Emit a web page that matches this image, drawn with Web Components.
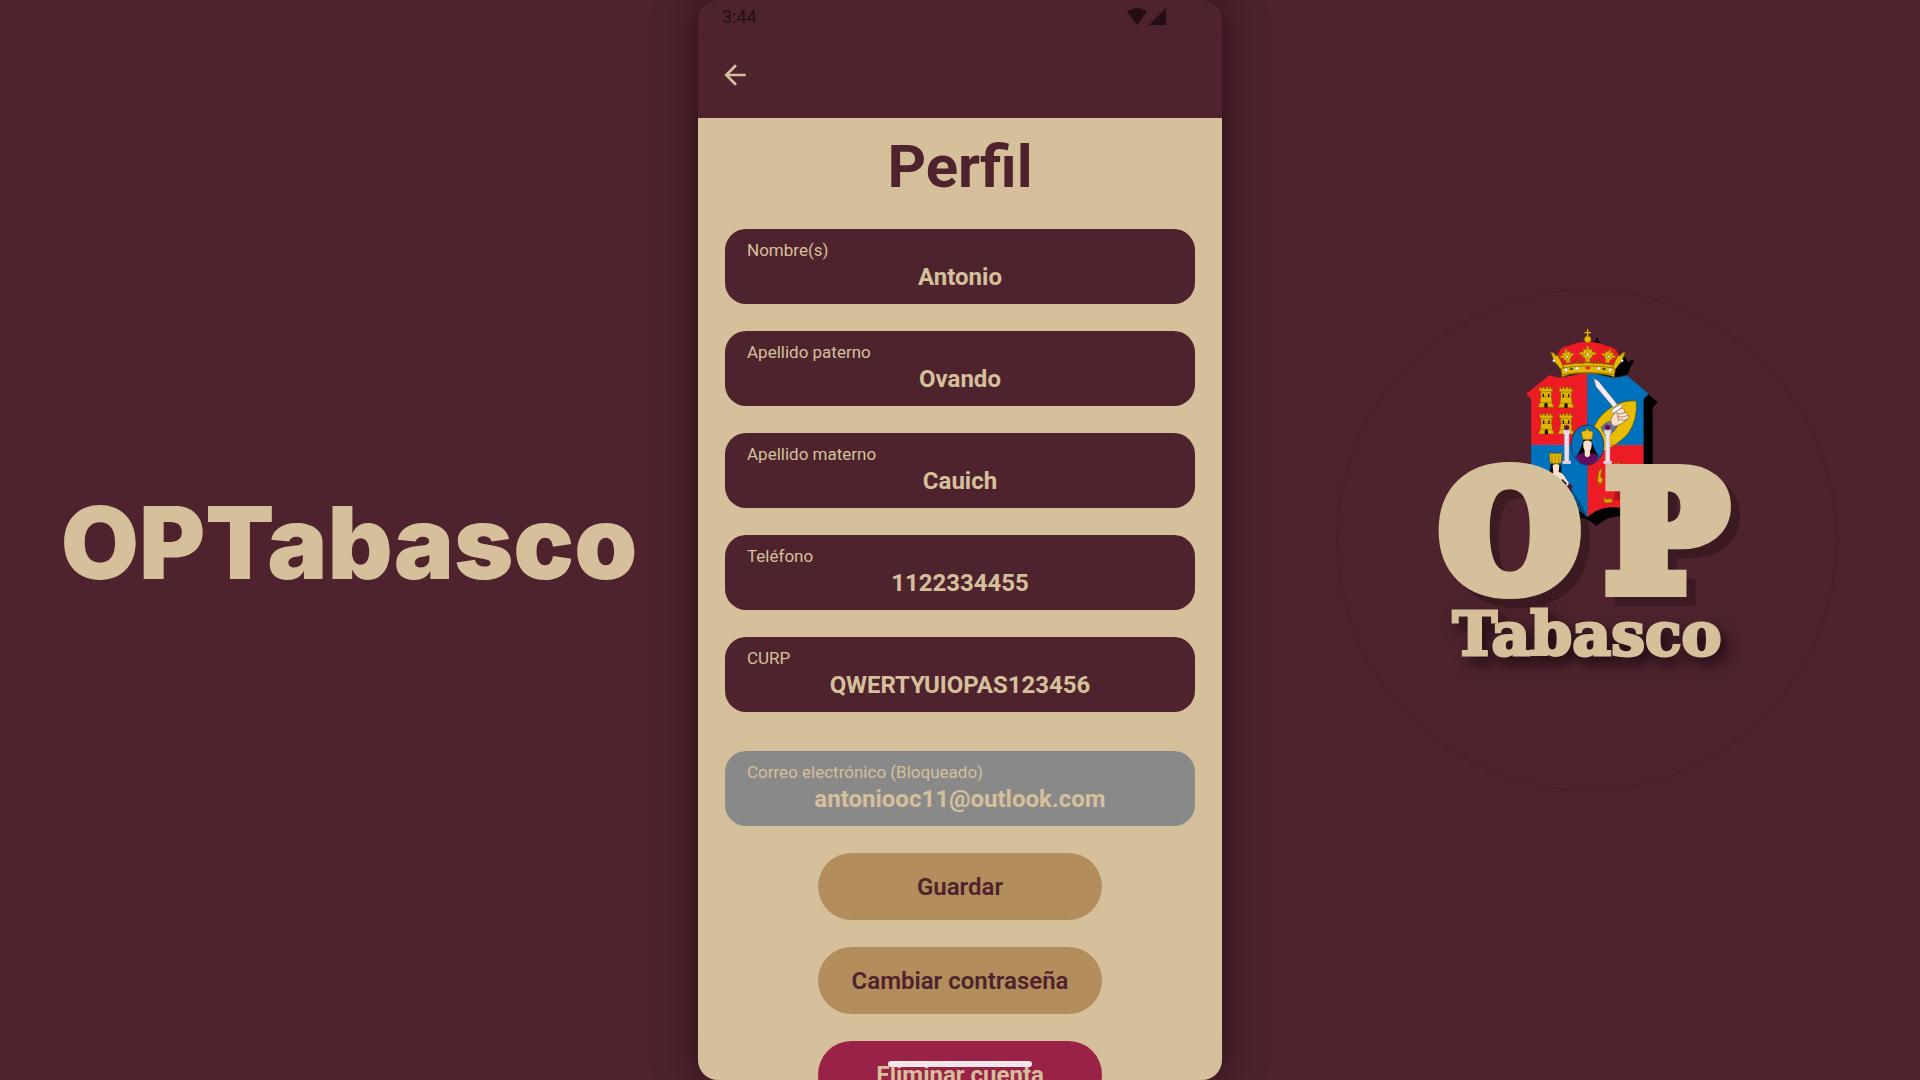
<!DOCTYPE html>
<html lang="es">
<head>
<meta charset="utf-8">
<title>OPTabasco – Perfil</title>
<style>
  html, body { height: 100%; margin: 0; }
  body { background: #4e232d; font-family: Roboto, "Liberation Sans", sans-serif; }
</style>
</head>
<body>
<promo-stage>
  <brand-title slot="left">OPTabasco</brand-title>
  <phone-screen slot="center">
    <status-bar slot="top">3:44</status-bar>
    <app-bar slot="top"></app-bar>
    <profile-form heading="Perfil">
      <profile-field label="Nombre(s)" value="Antonio"></profile-field>
      <profile-field label="Apellido paterno" value="Ovando"></profile-field>
      <profile-field label="Apellido materno" value="Cauich"></profile-field>
      <profile-field label="Teléfono" value="1122334455" type="tel"></profile-field>
      <profile-field label="CURP" value="QWERTYUIOPAS123456"></profile-field>
      <profile-field label="Correo electrónico (Bloqueado)" value="antoniooc11@outlook.com" type="email" locked></profile-field>
      <pill-button>Guardar</pill-button>
      <pill-button>Cambiar contraseña</pill-button>
      <pill-button danger>Eliminar cuenta</pill-button>
    </profile-form>
  </phone-screen>
  <op-logo slot="right"></op-logo>
</promo-stage>

<script>
const define = (name, render) => customElements.define(name, class extends HTMLElement {
  connectedCallback() {
    if (this.shadowRoot) return;
    const root = this.attachShadow({ mode: 'open' });
    const t = document.createElement('template');
    t.innerHTML = render(this);
    root.append(t.content.cloneNode(true));
  }
});

define('promo-stage', () => `
  <style>
    :host { display: grid; grid-template-columns: minmax(0, 1fr) 524px minmax(0, 1fr); height: 100vh; overflow: hidden; }
    div { display: flex; align-items: center; justify-content: center; min-width: 0; }
    .center { align-items: stretch; }
    .center ::slotted(*) { flex: 1; }
    .right { padding-left: 31px; }
  </style>
  <div><slot name="left"></slot></div>
  <div class="center"><slot name="center"></slot></div>
  <div class="right"><slot name="right"></slot></div>`);

define('brand-title', () => `
  <style>
    :host { display: block; padding-top: 3px; }
    h2 { margin: 0; font: 900 101px/124px Inter, sans-serif; color: #d5c09b; white-space: nowrap; }
  </style>
  <h2><slot></slot></h2>`);

define('phone-screen', () => `
  <style>
    :host { display: flex; flex-direction: column; position: relative; overflow: hidden; height: 100vh;
      border-radius: 20px; background: #4e232d; box-shadow: 0 0 40px rgba(15, 0, 8, .6); }
    .top { flex: none; }
    .home { position: absolute; left: 50%; bottom: 13px; width: 144px; height: 6px; margin-left: -72px;
      border-radius: 3px; background: #f1e7ea; }
  </style>
  <div class="top"><slot name="top"></slot></div>
  <slot></slot>
  <div class="home"></div>`);

define('status-bar', () => `
  <style>
    :host { display: flex; align-items: center; justify-content: space-between; height: 32px; padding: 0 56px 0 24px;
      color: #240e14; font-size: 18px; }
    .icons { display: flex; gap: 2px; }
    svg { display: block; fill: currentColor; }
  </style>
  <slot></slot>
  <span class="icons">
    <svg width="20" height="17" viewBox="0 0 20 17"><path d="M0 4Q10-4 20 4L10 17Z"/></svg>
    <svg width="17" height="17" viewBox="0 0 17 17"><path d="M17 0V17H0Z"/></svg>
  </span>`);

define('app-bar', () => `
  <style>
    :host { display: flex; align-items: center; height: 86px; padding-left: 21px; }
    button { display: block; padding: 0; border: 0; background: none; color: #d5c09b; }
    svg { display: block; }
  </style>
  <button type="button" aria-label="Atrás">
    <svg width="32" height="32" viewBox="0 0 24 24" fill="currentColor"><path d="M20 11H7.830l5.590-5.590L12 4l-8 8 8 8 1.410-1.410L7.830 13H20v-2z"/></svg>
  </button>`);

define('profile-form', el => `
  <style>
    :host { display: block; flex: none; background: #d5c09b; }
    form { display: flex; flex-direction: column; gap: 27px; padding: 14px 27px 27px; }
    h1 { margin: 0; font-size: 60px; line-height: 70px; font-weight: 700; color: #4e232d; text-align: center; }
  </style>
  <form><h1>${el.getAttribute('heading')}</h1><slot></slot></form>`);

define('profile-field', el => `
  <style>
    :host { display: flex; flex-direction: column; gap: 3px; box-sizing: border-box; height: 75px; padding: 11px 22px;
      border-radius: 21px; background: #4e232d; color: #d5c09b; }
    :host([locked]) { margin-top: 12px; background: #898989; }
    label { font-size: 17px; line-height: 20px; }
    input { width: 100%; box-sizing: border-box; height: 28px; padding: 0; border: 0; outline: 0; background: none;
      color: inherit; font: 700 24px/28px Roboto, "Liberation Sans", sans-serif; text-align: center; }
  </style>
  <label for="f">${el.getAttribute('label')}</label>
  <input id="f" type="${el.getAttribute('type') || 'text'}" value="${el.getAttribute('value')}" ${el.hasAttribute('locked') ? 'readonly' : ''}>`);

define('pill-button', () => `
  <style>
    :host { display: flex; justify-content: center; }
    button { width: 284px; height: 67px; padding: 0; border: 0; border-radius: 34px; background: #b38d5b; color: #4e232d;
      font: 600 24px/28px Roboto, "Liberation Sans", sans-serif; }
    :host([danger]) button { background: #9b2247; color: #d5c09b; font-weight: 700; }
  </style>
  <button type="button"><slot></slot></button>`);

define('op-logo', () => `
  <style>
    :host { display: block; flex: none; }
    svg { display: block; width: 500px; height: 500px; overflow: visible; }
    text { font-family: "DejaVu Serif", serif; font-weight: 700; fill: #d5c09b; stroke: #d5c09b; stroke-linejoin: miter; }
    .op { font-size: 158px; stroke-width: 18px; filter: drop-shadow(9px 9px 0 rgba(0, 0, 0, .24)); }
    .tab { font-size: 60px; stroke-width: 3px; filter: drop-shadow(6px 7px 7px rgba(10, 0, 6, .7)); }
  </style>
  <svg viewBox="0 0 500 500" role="img" aria-label="OP Tabasco">
    <defs>
      <path id="shield" d="M78 251L148 195Q168 204 190 202L262 186L335 202Q358 204 380 195L446 251L431 267V590Q425 602 400 600Q340 588 318 594Q285 600 262 622Q238 598 205 594Q175 590 125 600Q93 604 93 590V267Z"/>
      <path id="crown" d="M152 126Q163 122 168 132Q176 112 192 108Q212 108 224 101Q248 94 258 96V79H253V68H261V58H266V68H272V79H267V96Q280 94 302 101Q316 108 334 108Q352 114 358 132Q364 122 376 126Q364 140 360 158Q352 172 346 200Q330 196 264 196Q198 196 184 204Q178 176 170 160Q160 142 152 126Z"/>
      <clipPath id="in"><use href="#shield"/></clipPath>
      <g id="tower" stroke="#7a5c00" stroke-width="1.500">
        <path fill="#e0b400" d="M0 0H5V4H9V-1H15V4H20V-2H26V4H30V-1H35V5H40V0V12H36V26L38 46L44 60H-4L2 46L4 26V12H0Z"/>
        <path d="M4 13H36M2 46H38M4 28H36" fill="none"/>
        <path stroke="none" fill="#201400" d="M10 19h4v10h-4zM26 19h4v10h-4zM15 61V50Q20 42 25 50V61Z"/>
      </g>
      <g id="pillar">
        <path fill="#efe6ef" stroke="#9c8a98" stroke-width="1.500" d="M-10 10H10V22H7V103H12V111H-12V103H-7V22H-10Z"/>
        <path stroke="#a797a5" stroke-width="2" stroke-dasharray="2 6" d="M-3 26V100M3 29V100" fill="none"/>
        <path fill="#e3cfda" d="M-11 103H12V111H-12ZM-10 11H10V19H-10Z"/>
        <path fill="#5a1050" d="M-8-5L-3-2L0-7L4-2L8-4L7 6Q0 12-7 6Z"/>
      </g>
      <g id="leaf" fill="#e6b800" stroke="#6f5300" stroke-width="1.500">
        <path d="M0-26Q6-20 5-12Q12-18 15-12L12-6Q24-8 26 0Q18 4 14 4Q16 12 8 12Q6 18 8 24H-8Q-6 18-8 12Q-16 12-14 4Q-18 4-26 0Q-24-8-12-6L-15-12Q-12-18-5-12Q-6-20 0-26Z"/>
        <path d="M0-20V-6M-16 0L-6 1M16 0L6 1M0 8V20" fill="none"/>
        <circle r="4.500" fill="#fff" cy="2"/>
      </g>
    </defs>
    <circle cx="250" cy="250" r="250" fill="none" stroke="#461d27" stroke-width="1"/>
    <g transform="translate(163 20) scale(.33333)">
      <g transform="translate(27 26)"><use href="#shield"/><use href="#crown"/></g>
      <g clip-path="url(#in)">
        <path fill="#ed1c24" d="M70 180H262V405H70ZM262 405H450V640H262Z"/>
        <path fill="#0071bc" d="M262 180H450V405H262ZM70 405H262V640H70Z"/>
        <use href="#tower" x="118" y="232"/><use href="#tower" x="178" y="233"/>
        <use href="#tower" x="119" y="312"/><use href="#tower" x="178" y="312"/>
        <path d="M272 378Q286 320 340 288Q374 270 409 273Q414 330 384 371Q350 408 308 424Q290 400 272 378Z" fill="#e8bd00" stroke="#5a4700" stroke-width="2"/>
        <path d="M303 352Q320 332 338 334L352 350Q340 370 318 380Z" fill="#777891" stroke="#4c4c62" stroke-width="2"/>
        <path d="M308 352L334 366M316 342L344 356M318 378L336 336M306 364L322 338" stroke="#54546c" stroke-width="1.500"/>
        <path d="M338 318L352 300L366 294Q378 300 374 308Q386 308 384 316Q390 322 382 328L372 336Q350 350 340 348Q326 334 338 318Z" fill="#fbe0cb" stroke="#80604c" stroke-width="2"/>
        <path d="M352 312Q364 312 374 308M354 320Q370 324 384 316M358 328Q372 334 382 328M350 304L356 334" fill="none" stroke="#80604c" stroke-width="2"/>
        <path d="M281 204L296 214L352 283L341 293L288 230Z" fill="#f2edf5" stroke="#6f667c" stroke-width="2"/>
        <path d="M334 302Q340 294 362 283L368 289Q352 304 338 311Z" fill="#fff" stroke="#6f667c" stroke-width="2"/>
        <path d="M262 190V622M93 405H431" stroke="#6a6aa0" stroke-width="1.500" fill="none"/>
        <g fill="#d9ad00" stroke="#806000" stroke-width="2">
          <path d="M342 458L350 462L356 457L360 464L368 460L372 468L382 466L384 478H346Z"/>
          <path d="M296 484L306 474L302 500L310 510L294 530L300 520L292 514Z"/>
          <path d="M310 560L318 568L336 566V578H314Z"/>
        </g>
        <g>
          <path d="M152 462Q150 490 144 506L156 520H184V464Z" fill="#0b0709"/>
          <path d="M158 466Q168 458 178 466L176 486Q190 490 196 504L210 524L202 532L186 516L184 530H150L146 500Q154 490 160 488Z" fill="#fbe0cb"/>
          <path d="M186 506L200 520L196 530L182 518Z" fill="#130b10"/>
          <path d="M148 436L147 430H187L185 436L184 458Q166 464 150 458Z" fill="#e6b800" stroke="#6f5300" stroke-width="2"/>
          <path d="M156 434V456M166 434V458M176 434V456" stroke="#6f5300" stroke-width="1.500"/>
          <path d="M194 524L202 528L208 518L212 524L218 528L214 538L218 544L204 544L196 538Z" fill="#4d1630"/>
          <path d="M206 560Q232 586 250 612M216 558Q242 586 256 616M210 566L226 568M222 584L238 584M234 600L248 600" fill="none" stroke="#17406a" stroke-width="2"/>
        </g>
      </g>
      <use href="#shield" fill="none" stroke="#3a2030" stroke-width="1"/>
      <ellipse cx="262" cy="405" rx="49" ry="60" fill="#0071bc" stroke="#1a1a35" stroke-width="2"/>
      <path d="M250 390Q262 378 274 390Q282 420 296 438Q276 452 262 450Q244 452 228 440Q244 418 250 390Z" fill="#0b0508"/>
      <path d="M226 438Q240 428 254 430L262 440L272 430Q286 430 297 438Q286 464 262 465Q238 464 226 438Z" fill="#610f5c"/>
      <path d="M250 396Q262 386 275 396Q276 414 270 422V436Q262 448 254 436V422Q248 412 250 396Z" fill="#fbe0cb"/>
      <path d="M245 372Q242 362 258 362L259 356H265L266 362Q280 362 279 372L276 387Q262 392 248 387Z" fill="#efbd18" stroke="#7a5c00" stroke-width="2"/>
      <use href="#pillar" x="200" y="350"/><use href="#pillar" x="323" y="350"/>
      <path d="M172 140Q178 108 204 108Q226 98 262 94Q298 98 320 108Q350 108 358 140L344 190L262 188L184 190Z" fill="#ed1c24" stroke="#7a0c10" stroke-width="1"/>
      <g fill="#e6b800" stroke="#6f5300" stroke-width="2">
        <path d="M182 166Q220 158 264 158Q308 158 346 166L343 202Q326 192 264 190Q204 190 186 202Z"/>
        <path d="M182 174Q264 162 346 174M185 194Q264 180 343 194" fill="none"/>
        <path d="M152 126Q164 128 168 138Q172 132 174 138Q184 152 190 172L182 178Q174 166 162 154Q166 150 160 146Z"/>
        <path d="M376 126Q364 128 360 138Q356 132 354 138Q344 152 338 172L346 178Q354 166 366 154Q362 150 368 146Z"/>
        <path d="M214 166L232 144L238 162L246 148L248 164M312 166L296 144L290 162L282 148L280 164" fill="none"/>
      </g>
      <use href="#leaf" x="263" y="132"/>
      <g transform="translate(201 138) rotate(-12) scale(.85)"><use href="#leaf"/></g>
      <g transform="translate(326 138) rotate(12) scale(.85)"><use href="#leaf"/></g>
      <g fill="#fff" stroke="#777" stroke-width="1"><circle cx="198" cy="180" r="5"/><circle cx="231" cy="175" r="5"/><circle cx="296" cy="175" r="5"/><circle cx="330" cy="180" r="5"/><circle cx="162" cy="152" r="4"/><circle cx="366" cy="152" r="4"/></g>
      <path d="M254 174L263 169L273 174L263 179Z" fill="#ed1c24"/>
      <path d="M208 178L214 173L221 176L214 181ZM305 176L312 173L319 178L312 181Z" fill="#234a3a"/>
      <circle cx="263" cy="88" r="10" fill="#e6b800" stroke="#6f5300" stroke-width="1.500"/>
      <path d="M261 79V70H253V66H261V57H265V66H273V70H265V79Z" fill="#e6b800"/>
    </g>
    <text class="op" x="104 270" y="298">OP</text>
    <text class="tab" x="250" y="365" text-anchor="middle">Tabasco</text>
  </svg>`);
</script>
</body>
</html>
